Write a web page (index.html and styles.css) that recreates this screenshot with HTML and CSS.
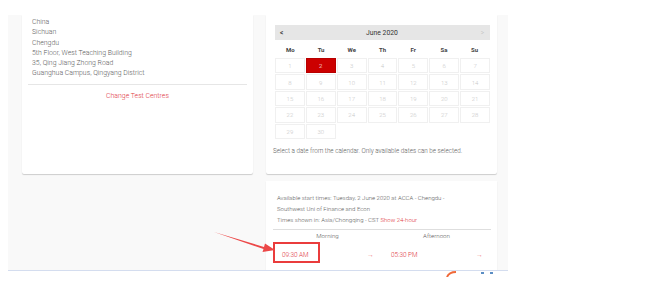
FILE: index.html
```html
<!DOCTYPE html>
<html>
<head>
<meta charset="utf-8">
<link rel="stylesheet" href="styles.css">
</head>
<body>
<div class="page">
  <div class="cols">
    <div class="card address">
      <div class="lines">
        <div>China</div>
        <div>Sichuan</div>
        <div>Chengdu</div>
        <div>5th Floor, West Teaching Building</div>
        <div>35, Qing Jiang Zhong Road</div>
        <div>Guanghua Campus, Qingyang District</div>
      </div>
      <div class="divider"></div>
      <div class="change">Change Test Centres</div>
    </div>
    <div class="right">
      <div class="card cal">
        <div class="cal-head"><span class="prev">&lt;</span><span class="month">June 2020</span><span class="next">&gt;</span></div>
        <div class="wk">
          <span>Mo</span><span>Tu</span><span>We</span><span>Th</span><span>Fr</span><span>Sa</span><span>Su</span>
        </div>
        <div class="days">
          <span>1</span><span class="sel">2</span><span>3</span><span>4</span><span>5</span><span>6</span><span>7</span>
          <span>8</span><span>9</span><span>10</span><span>11</span><span>12</span><span>13</span><span>14</span>
          <span>15</span><span>16</span><span>17</span><span>18</span><span>19</span><span>20</span><span>21</span>
          <span>22</span><span>23</span><span>24</span><span>25</span><span>26</span><span>27</span><span>28</span>
          <span>29</span><span>30</span>
        </div>
        <div class="hint">Select a date from the calendar. Only available dates can be selected.</div>
      </div>
      <div class="card times">
        <div class="info">
          <div>Available start times: Tuesday, 2 June 2020 at ACCA - Chengdu -</div>
          <div>Southwest Uni of Finance and Econ</div>
          <div>Times shown in: Asia/Chongqing - CST <span class="red">Show 24-hour</span></div>
        </div>
        <div class="divider2"></div>
        <div class="slots">
          <div class="slot-col">
            <div class="slot-title">Morning</div>
            <div class="slot"><span class="t">09:30 AM</span><span class="arr">&rarr;</span></div>
          </div>
          <div class="slot-col">
            <div class="slot-title">Afternoon</div>
            <div class="slot"><span class="t">05:30 PM</span><span class="arr">&rarr;</span></div>
          </div>
        </div>
      </div>
    </div>
  </div>
  <div class="mark-box"></div>
  <svg class="mark-arrow" width="70" height="30" viewBox="0 0 70 30">
    <path d="M2 2 L52 17 L53 13.5 L63 20 L50.5 22 L51.5 19 Z" fill="#ec4848"/>
  </svg>
</div>
<div class="below">
  <svg class="curl" width="12" height="6" viewBox="0 0 12 6"><path d="M1 6 Q3 1 10 1" stroke="#f06a3a" stroke-width="2" fill="none"/></svg>
  <span class="blip b1"></span><span class="blip b2"></span>
</div>
</body>
</html>
```

FILE: styles.css
```css
html, body {
  margin: 0;
  padding: 0;
  background: #ffffff;
  font-family: Roboto, "Liberation Sans", Arial, sans-serif;
  font-weight: 300;
  color: #5c5c5c;
}
.page {
  position: relative;
  margin: 15px 0 0 8px;
  width: 500px;
  height: 255px;
  background: #f9f9f9;
  border-bottom: 1px solid #d4ddef;
  overflow: hidden;
}
.cols {
  display: grid;
  grid-template-columns: 231px 231px;
  column-gap: 13px;
  padding-left: 14px;
}
.card {
  background: #fff;
  box-shadow: 0 1px 1px rgba(0,0,0,0.18);
  border-radius: 0 0 2px 2px;
}
.address {
  height: 159px;
  box-sizing: border-box;
  padding-top: 2px;
}
.lines {
  padding-left: 10px;
  font-size: 6.9px;
  line-height: 10.3px;
  color: #5c5c5c;
}
.divider {
  margin: 5px 6px 0 6px;
  border-top: 1px solid #e6e6e6;
}
.change {
  margin-top: 7px;
  text-align: center;
  font-size: 6.9px;
  color: #e0353d;
}
.right {
  display: flex;
  flex-direction: column;
  gap: 7px;
}
.cal {
  height: 159px;
  box-sizing: border-box;
  padding: 10px 7px 0 9px;
}
.cal-head {
  display: flex;
  align-items: center;
  justify-content: space-between;
  height: 15px;
  background: #e6e6e6;
  padding: 0 6px 0 5px;
  font-size: 6.5px;
  color: #333;
}
.cal-head .prev { font-weight: bold; color: #444; }
.cal-head .next { color: #bbb; }
.cal-head .month { font-size: 6.8px; color: #333; font-weight: 400; }
.wk {
  display: grid;
  grid-template-columns: repeat(7, 1fr);
  height: 18px;
  align-items: center;
  text-align: center;
  font-size: 6px;
  font-weight: bold;
  color: #444;
}
.days {
  display: grid;
  grid-template-columns: repeat(7, 1fr);
  grid-auto-rows: 15.4px;
  gap: 1px;
}
.days span {
  border: 1px solid #f0f0f0;
  display: flex;
  align-items: center;
  justify-content: center;
  font-size: 6px;
  color: #c8c8c8;
}
.days .sel {
  background: #cc0000;
  border-color: #b80000;
  color: #fff;
}
.hint {
  margin: 8px 0 0 -2px;
  font-size: 6.3px;
  color: #5c5c5c;
}
.times {
  height: 120px;
  padding: 11px 6px 0 7px;
  box-sizing: border-box;
}
.info {
  padding-left: 4px;
  font-size: 6px;
  line-height: 11px;
  color: #5c5c5c;
}
.red { color: #e0353d; }
.divider2 {
  margin-top: 4px;
  border-top: 1px solid #dedede;
}
.slots {
  display: grid;
  grid-template-columns: 1fr 1fr;
}
.slot-title {
  text-align: center;
  font-size: 6.2px;
  line-height: 12px;
  color: #5c5c5c;
}
.slot {
  display: flex;
  align-items: center;
  justify-content: space-between;
  height: 20px;
  padding: 0 8px 0 9px;
  margin-top: 1px;
  font-size: 6.4px;
  color: #e0353d;
}
.slot .t { padding-top: 3px; }
.slot .arr { color: #f08a8a; font-size: 7px; padding-top: 3px; }
.mark-box {
  position: absolute;
  left: 265px;
  top: 227px;
  width: 43px;
  height: 17px;
  border: 2px solid #ea3c3c;
}
.mark-arrow {
  position: absolute;
  left: 204px;
  top: 215px;
}
.below {
  position: relative;
  height: 10px;
}
.curl {
  position: absolute;
  left: 446px;
  top: 0;
}
.blip {
  position: absolute;
  top: 1px;
  width: 3px;
  height: 2px;
  background: #5b8ec4;
}
.b1 { left: 481px; }
.b2 { left: 490px; }
```
